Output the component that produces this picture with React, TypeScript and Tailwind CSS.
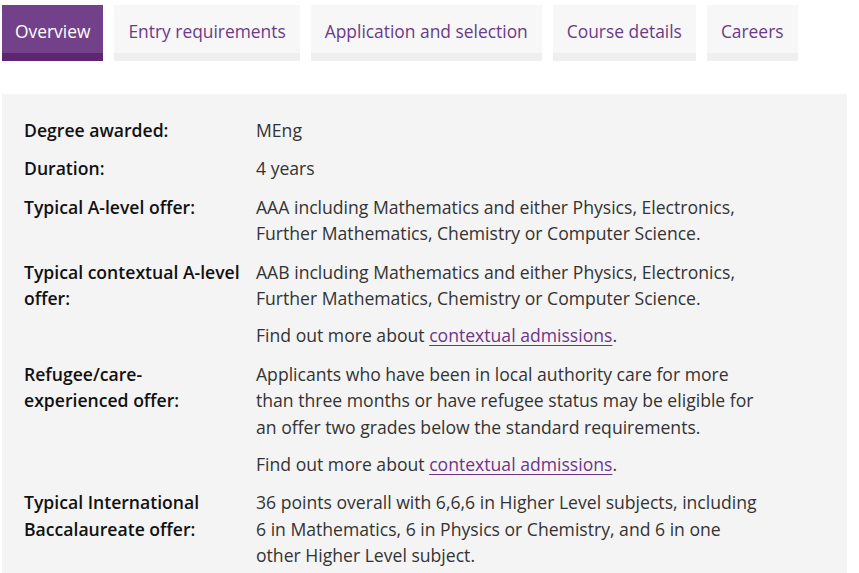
import React from "react";

const tabs = ["Overview", "Entry requirements", "Application and selection", "Course details", "Careers"];

function Link({ children }: { children: React.ReactNode }) {
  return <a href="#" className="text-[#6e3488] underline underline-offset-[3px] decoration-[1px]">{children}</a>;
}

function Row({ label, children }: { label: React.ReactNode; children: React.ReactNode }) {
  return (
    <div className="flex mb-[12px]">
      <div className="w-[218px] mr-[14px] shrink-0 font-semibold text-[#111]">{label}</div>
      <div className="w-[510px] text-[#333] flex flex-col gap-[11px]">{children}</div>
    </div>
  );
}

export default function App() {
  return (
    <div className="w-[859px] h-[573px] bg-white overflow-hidden text-[17.6px] leading-[26.4px]" style={{ fontFamily: '"Open Sans", sans-serif' }}>
      <div className="flex gap-[11px] pl-[2px] pt-[5px]">
        {tabs.map((t, i) => (
          <div
            key={t}
            className={
              i === 0
                ? "h-[56px] px-[13px] flex items-center pt-[4px] bg-[#734189] text-white border-b-[8px] border-[#5c2673] text-[17.4px]"
                : "h-[56px] px-[14px] flex items-center pt-[4px] bg-[#f7f7f7] text-[#6b3a8a] border-b-[8px] border-[#efefef] text-[17.4px]"
            }
          >
            {t}
          </div>
        ))}
      </div>
      <div className="mt-[33px] ml-[2px] w-[845px] bg-[#f4f4f4] pl-[22px] pt-[23px] pb-[20px]">
        <Row label="Degree awarded:"><p>MEng</p></Row>
        <Row label="Duration:"><p>4 years</p></Row>
        <Row label="Typical A-level offer:">
          <p>AAA including Mathematics and either Physics, Electronics, Further Mathematics, Chemistry or Computer Science.</p>
        </Row>
        <Row label="Typical contextual A-level offer:">
          <p>AAB including Mathematics and either Physics, Electronics, Further Mathematics, Chemistry or Computer Science.</p>
          <p>Find out more about <Link>contextual admissions</Link>.</p>
        </Row>
        <Row label="Refugee/care-experienced offer:">
          <p>Applicants who have been in local authority care for more than three months or have refugee status may be eligible for an offer two grades below the standard requirements.</p>
          <p>Find out more about <Link>contextual admissions</Link>.</p>
        </Row>
        <Row label="Typical International Baccalaureate offer:">
          <p>36 points overall with 6,6,6 in Higher Level subjects, including 6 in Mathematics, 6 in Physics or Chemistry, and 6 in one other Higher Level subject.</p>
        </Row>
      </div>
    </div>
  );
}
